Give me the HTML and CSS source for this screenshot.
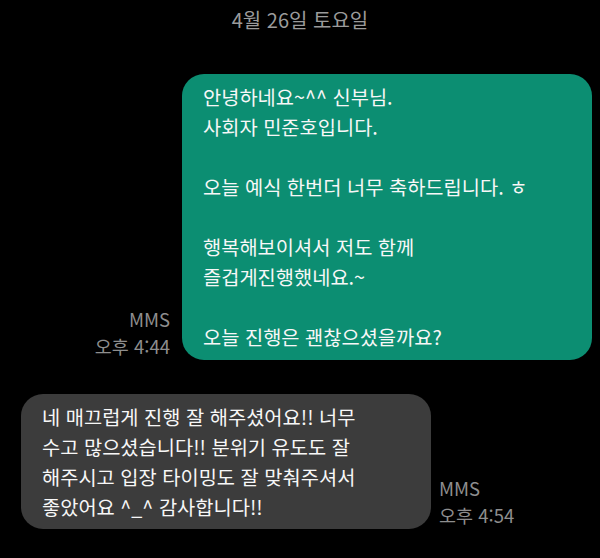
FILE: index.html
```html
<!DOCTYPE html>
<html lang="ko">
<head>
    <meta charset="utf-8">
    <title>메시지</title>
    <link rel="stylesheet" href="styles.css">
</head>
<body>
    <div class="chat">
        <div class="date">4월 26일 토요일</div>

        <div class="row sent">
            <div class="meta">
                <div>MMS</div>
                <div>오후 4:44</div>
            </div>
            <div class="bubble green">
                안녕하네요~^^ 신부님.<br>
                사회자 민준호입니다.<br>
                <br>
                오늘 예식 한번더 너무 축하드립니다. ㅎ<br>
                <br>
                행복해보이셔서 저도 함께<br>
                즐겁게진행했네요.~<br>
                <br>
                오늘 진행은 괜찮으셨을까요?
            </div>
        </div>

        <div class="row received">
            <div class="bubble gray">
                네 매끄럽게 진행 잘 해주셨어요!! 너무<br>
                수고 많으셨습니다!! 분위기 유도도 잘<br>
                해주시고 입장 타이밍도 잘 맞춰주셔서<br>
                좋았어요 ^_^ 감사합니다!!
            </div>
            <div class="meta">
                <div>MMS</div>
                <div>오후 4:54</div>
            </div>
        </div>
    </div>
</body>
</html>
```

FILE: styles.css
```css
body {
    margin: 0;
    background-color: #000;
    font-family: "Noto Sans CJK KR", "Noto Sans", sans-serif;
}
.chat {
    display: flex;
    flex-direction: column;
}
.date {
    text-align: center;
    color: #9b9b9b;
    font-size: 20px;
    line-height: 40px;
    margin-bottom: 34px;
}
.row {
    display: flex;
    align-items: flex-end;
}
.sent {
    justify-content: flex-end;
    gap: 12px;
    padding-right: 8px;
    margin-bottom: 34px;
}
.received {
    gap: 8px;
    padding-left: 21px;
}
.bubble {
    width: 410px;
    box-sizing: border-box;
    padding: 8px 21px;
    border-radius: 22px;
    color: #f7f7f7;
    font-size: 19.8px;
    line-height: 30px;
}
.green {
    background-color: #0c8e72;
}
.gray {
    background-color: #3c3c3c;
    padding-bottom: 7px;
}
.meta {
    color: #8e8e8e;
    font-size: 18.5px;
    line-height: 27px;
}
.sent .meta {
    text-align: right;
}
```
